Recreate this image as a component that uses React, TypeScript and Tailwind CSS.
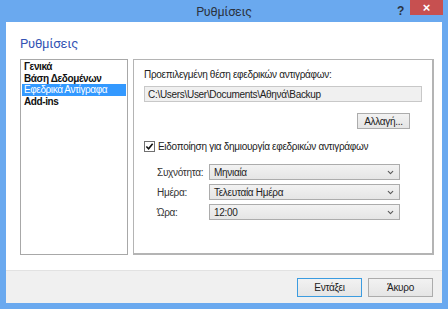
import { ChevronDown } from "lucide-react";

const ui = { fontFamily: "'Liberation Sans', Arial, sans-serif" };
const head = { fontFamily: "Roboto, 'Liberation Sans', sans-serif" };

function Select({ value }: { value: string }) {
  return (
    <div className="flex h-[16px] w-[191px] items-center justify-between border border-[#acacac] bg-gradient-to-b from-[#f2f2f2] to-[#e5e5e5] pl-[4px] pr-[4px] text-[#1e1e1e]">
      <span>{value}</span>
      <ChevronDown size={9} strokeWidth={3} className="text-[#5a5a5a]" />
    </div>
  );
}

export default function App() {
  const items = ["Γενικά", "Βάση Δεδομένων", "Εφεδρικά Αντίγραφα", "Add-ins"];

  return (
    <div className="flex h-[309px] w-[448px] flex-col bg-[#6aa9ef] text-[10px] tracking-[-0.3px]" style={ui}>
      {/* title bar */}
      <div className="grid h-[22px] grid-cols-[1fr_auto_1fr] items-start">
        <div />
        <div className="pt-[4px] text-[12.5px] leading-[15px] tracking-[-0.2px] text-[#2b3340]" style={head}>
          Ρυθμίσεις
        </div>
        <div className="flex justify-end">
          <span className="mr-[6px] pt-[2px] text-[12px] font-bold text-[#2b3340]">?</span>
          <div className="mr-[5px] flex h-[15px] w-[33px] items-center justify-center bg-[#c75050] text-[13px] font-bold leading-none text-white">
            ×
          </div>
        </div>
      </div>

      <div className="mx-[6px] mb-[6px] flex flex-1 flex-col bg-white">
        <div className="flex flex-1 flex-col pl-[14px] pr-[12px]">
          <div className="pt-[13px] text-[13px] leading-[18px] tracking-[-0.2px] text-[#3454b4]" style={head}>
            Ρυθμίσεις
          </div>
          <div className="mt-[6px] flex h-[196px] gap-[5px]">
            {/* list */}
            <div className="w-[108px] shrink-0 border border-[#a8a8a8] p-[1px] pt-[1px]">
              {items.map((it, i) => (
                <div
                  key={it}
                  className={
                    "h-[11.5px] whitespace-nowrap pl-[2px] font-bold leading-[11.5px] tracking-[-0.4px] " +
                    (i === 2 ? "bg-[#3399ff] font-normal tracking-[-0.1px] text-white" : "text-[#111]")
                  }
                >
                  {it}
                </div>
              ))}
            </div>
            {/* panel */}
            <div className="flex-1 border border-[#b4b4b4] border-b-2 border-r-2 px-[10px] pt-[8px] text-[#222]">
              <div className="leading-[14px]">Προεπιλεγμένη θέση εφεδρικών αντιγράφων:</div>
              <div className="mt-[4px] flex h-[16px] w-[278px] items-center border border-[#c8c8c8] bg-[#f0f0f0] pl-[3px]">
                C:\Users\User\Documents\Αθηνά\Backup
              </div>
              <div className="mt-[11px] flex w-[278px] justify-end pr-[12px]">
                <div className="flex h-[16px] w-[53px] items-center justify-center border border-[#acacac] bg-gradient-to-b from-[#f2f2f2] to-[#e5e5e5]">
                  Αλλαγή...
                </div>
              </div>
              <div className="mt-[10px] flex items-center gap-[3px]">
                <div className="flex h-[11px] w-[11px] items-center justify-center border border-[#707070] bg-white">
                  <svg viewBox="0 0 10 10" className="h-[9px] w-[9px]">
                    <path d="M1.5 5 L4 7.5 L8.5 2" fill="none" stroke="#111" strokeWidth="1.8" />
                  </svg>
                </div>
                <span>Ειδοποίηση για δημιουργία εφεδρικών αντιγράφων</span>
              </div>
              <div className="mt-[10px] grid grid-cols-[52px_191px] items-center gap-y-[4px] pl-[13px]">
                <span className="whitespace-nowrap text-[#333]">Συχνότητα:</span>
                <Select value="Μηνιαία" />
                <span className="text-[#333]">Ημέρα:</span>
                <Select value="Τελευταία Ημέρα" />
                <span className="text-[#333]">Ώρα:</span>
                <Select value="12:00" />
              </div>
            </div>
          </div>
        </div>
        <div className="flex h-[33px] items-center justify-end gap-[6px] border-t border-[#e2e2e2] bg-[#f0f0f0] pr-[9px]">
          <div className="flex h-[19px] w-[65px] items-center justify-center border border-[#3c9ce0] bg-gradient-to-b from-[#f2f2f2] to-[#e5e5e5] text-[#222]">
            Εντάξει
          </div>
          <div className="flex h-[19px] w-[65px] items-center justify-center border border-[#acacac] bg-gradient-to-b from-[#f2f2f2] to-[#e5e5e5] text-[#222]">
            Άκυρο
          </div>
        </div>
      </div>
    </div>
  );
}
